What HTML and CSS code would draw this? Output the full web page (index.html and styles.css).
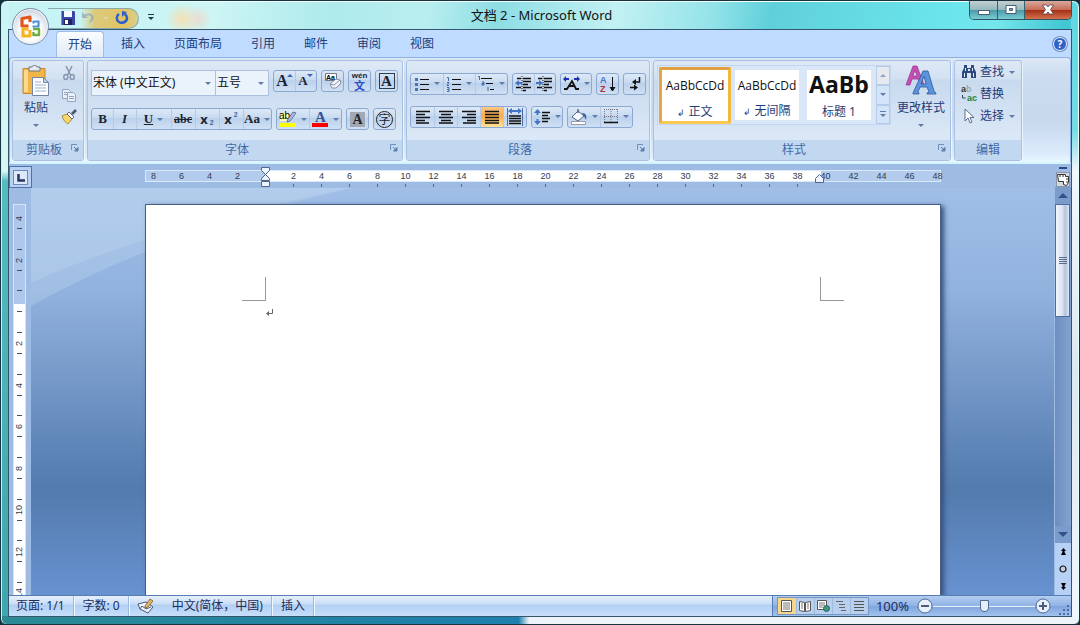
FILE: index.html
```html
<!DOCTYPE html>
<html lang="zh-CN">
<head>
<meta charset="utf-8">
<title>文档 2 - Microsoft Word</title>
<link rel="stylesheet" href="styles.css">
</head>
<body>
<div class="window">
  <header class="titlebar">
    <div class="quick">
      <button class="qbtn" aria-label="保存"><svg width="14" height="14" viewBox="0 0 14 14"><path d="M0 0h13l1 1v13H0z" fill="#3c46a6"/><path d="M3 0h8v6H3z" fill="#f4f8ff"/><path d="M3 8h8v6H3z" fill="#23235e"/><path d="M4 9h3v4H4z" fill="#fff"/><path d="M0 0h1v14H0z" fill="#7f8be0"/></svg></button>
      <button class="qbtn faded" aria-label="撤消"><svg width="16" height="14" viewBox="0 0 16 14"><path d="M1 1v6h6L5 5c3-2 6 0 5 3l-2 4c5-2 6-6 3-8.500C9 2 6 2 3.500 3.500z" fill="#8fa3b8"/></svg><i class="arrow pale"></i></button>
      <button class="qbtn" aria-label="重复"><svg width="14" height="14" viewBox="0 0 14 14"><path d="M4 3C1 5 1 9 4 11s8 0 8-4c0-2-1-3-2-4" fill="none" stroke="#2b5fd0" stroke-width="2.500"/><path d="M7 0v6L12 1z" fill="#2b5fd0"/></svg></button>
    </div>
    <button class="qmore" aria-label="自定义快速访问工具栏"><i class="bar"></i><i class="arrow dark"></i></button>
    <h1 class="caption">文档 2 - Microsoft Word</h1>
    <div class="controls">
      <button class="ctl min" aria-label="最小化"><svg width="14" height="12" viewBox="0 0 14 12"><path d="M1.500 6.500h11v4h-11z" fill="#fff" stroke="#4a5d70"/></svg></button>
      <button class="ctl max" aria-label="最大化"><svg width="14" height="12" viewBox="0 0 14 12"><path d="M2 1.500h10v8H2z" fill="#fff" stroke="#4a5d70"/><path d="M5.500 4.500h3v2h-3z" fill="#70b8c4" stroke="#4a5d70"/></svg></button>
      <button class="ctl close" aria-label="关闭"><svg width="14" height="12" viewBox="0 0 14 12"><path d="M1.500 1h4L7 3l1.500-2h4L9.500 5.500l3 4.500h-4L7 8l-1.500 2h-4l3-4.500z" fill="#fff" stroke="#5a4850" stroke-width=".8"/></svg></button>
    </div>
    <button class="orb" aria-label="Office 按钮"><svg width="24" height="24" viewBox="0 0 24 24" fill="none"><path d="M9.500 11H3V3.500L11 2V7" stroke="#e0561c" stroke-width="3.200" stroke-linejoin="round"/><path d="M13.500 11.500h6v-5h-5v2" stroke="#4a93dc" stroke-width="2.200" stroke-linejoin="round"/><path d="M9.500 14H4v7h7v-6" stroke="#f5b420" stroke-width="3.200" stroke-linejoin="round"/><path d="M14 14h6v6h-5.500v-3" stroke="#6fae3c" stroke-width="2.400" stroke-linejoin="round"/></svg></button>
  </header>

  <div class="client">
    <nav class="tabs">
      <button class="tab active">开始</button>
      <button class="tab">插入</button>
      <button class="tab">页面布局</button>
      <button class="tab">引用</button>
      <button class="tab">邮件</button>
      <button class="tab">审阅</button>
      <button class="tab">视图</button>
      <button class="help" aria-label="帮助">?</button>
    </nav>

    <div class="ribbon">
      <section class="group clip">
        <div class="body cliprow">
          <button class="big"><svg width="28" height="32" viewBox="0 0 28 32"><path d="M1 3.500h22v25H1z" fill="#f2b548" stroke="#c98a2a"/><path d="M2 5h4v22H2z" fill="#ffd98a"/><path d="M7 2h3c0-2 5-2 5 0h3v4H7z" fill="#e6ebf2" stroke="#6b7482"/><path d="M10.500 12.500h11l5 5v13h-16z" fill="#fdfeff" stroke="#7486a5"/><path d="M21.500 12.500v5h5z" fill="#c8d6ea" stroke="#7486a5"/><path d="M13 17h6M13 20h11M13 23h11M13 26h11" stroke="#9fb0cc"/></svg><span>粘贴</span><i class="arrow"></i></button>
          <div class="stack">
            <button class="mini" aria-label="剪切"><svg width="16" height="16" viewBox="0 0 16 16" fill="none" stroke="#8798b3"><path d="M5 1l4.500 9M11 1L6.500 10" stroke-width="1.600"/><ellipse cx="4.800" cy="12" rx="2" ry="2.500" stroke-width="1.500"/><ellipse cx="11.200" cy="12" rx="2" ry="2.500" stroke-width="1.500"/></svg></button>
            <button class="mini" aria-label="复制"><svg width="16" height="16" viewBox="0 0 16 16" fill="#e9f0fa" stroke="#90a4c4"><path d="M1.500 2.500h6l2 2v7h-8z"/><path d="M6.500 5.500h6l2 2v7h-8z"/><path d="M3 5.500h3M3 7.500h3M8 9.500h5M8 11.500h5"/></svg></button>
            <button class="mini" aria-label="格式刷"><svg width="16" height="16" viewBox="0 0 16 16"><path d="M1 7l5-2 5 5-4 5c-2-1-5-4-6-8z" fill="#f6d66c" stroke="#9b7b27" stroke-width=".8"/><path d="M6 5l2-2 5 5-2 2z" fill="#fff" stroke="#667"/><path d="M10 4l4-4 2 2-4 4z" fill="#4a5878"/></svg></button>
          </div>
        </div>
        <footer class="label"><span>剪贴板</span><button class="launch" aria-label="剪贴板选项"><svg width="8" height="8" viewBox="0 0 8 8"><path d="M.5 6V.5H6" fill="none" stroke="#6f8fbd"/><path d="M3 3l3 3M7 3.500V7H3.500z" stroke="#5c7cab" fill="#5c7cab"/></svg></button></footer>
      </section>

      <section class="group font">
        <div class="body rows">
          <div class="row top">
            <label class="combo wide"><select aria-label="字体"><option>宋体 (中文正文)</option></select></label>
            <label class="combo narrow"><select aria-label="字号"><option>五号</option></select></label>
            <div class="set"><button class="tb w22 serif" aria-label="增大字体"><b class="f16">A</b><i class="up blue"></i></button><button class="tb w22 serif" aria-label="缩小字体"><b class="f13">A</b><i class="down blue"></i></button></div>
            <div class="set"><button class="tb w22" aria-label="清除格式"><svg width="18" height="18" viewBox="0 0 18 18"><path d="M1.500 1.500h11v7h-11z" fill="#fff" stroke="#778"/><text x="2" y="8" font-size="7" font-weight="bold" font-family="Liberation Sans">Aa</text><path d="M6 12l6-5 4 1 1 3-5 5H8z" fill="#f3f5fa" stroke="#8490a8"/><path d="M6 12l4 1 6-5" fill="none" stroke="#8490a8"/></svg></button></div>
            <div class="set"><button class="tb w22 pinyin" aria-label="拼音指南"><small>wén</small><span>文</span></button></div>
            <div class="set"><button class="tb w22 serif" aria-label="字符边框"><b class="boxed">A</b></button></div>
          </div>
          <div class="row">
            <div class="set"><button class="tb w22 serif f13"><b>B</b></button><button class="tb w23 serif f13"><b><em>I</em></b></button><button class="tb w35 serif f13"><b><u>U</u></b><i class="arrow"></i></button><button class="tb w24 serif f12"><b><s>abc</s></b></button><button class="tb w24 f13"><b>x</b><sub>2</sub></button><button class="tb w24 f13"><b>x</b><sup>2</sup></button><button class="tb w28 serif f13"><b>Aa</b><i class="arrow"></i></button></div>
            <div class="set"><button class="tb w32" aria-label="突出显示"><svg width="18" height="18" viewBox="0 0 18 18"><path d="M1 13h16v4H1z" fill="#ff0"/><path d="M1 3h9v8H1z" fill="#ffffb0"/><text x="0" y="9" font-size="10" font-family="Liberation Sans">ab</text><path d="M9 9l5-7 3 1-6 8-3 1z" fill="#a9bedf" stroke="#4a5f85" stroke-width=".8"/></svg><i class="arrow"></i></button><button class="tb w32" aria-label="字体颜色"><svg width="18" height="18" viewBox="0 0 18 18"><path d="M1 13h16v4H1z" fill="#f00"/><text x="4" y="12" font-size="15" font-weight="bold" fill="#2f5597" font-family="Liberation Serif">A</text></svg><i class="arrow"></i></button></div>
            <div class="set"><button class="tb w22 serif" aria-label="字符底纹"><b class="shaded">A</b></button></div>
            <div class="set"><button class="tb w22" aria-label="带圈字符"><span class="circled">字</span></button></div>
          </div>
        </div>
        <footer class="label"><span>字体</span><button class="launch" aria-label="字体选项"><svg width="8" height="8" viewBox="0 0 8 8"><path d="M.5 6V.5H6" fill="none" stroke="#6f8fbd"/><path d="M3 3l3 3M7 3.500V7H3.500z" stroke="#5c7cab" fill="#5c7cab"/></svg></button></footer>
      </section>

      <section class="group para">
        <div class="body rows">
          <div class="row">
            <div class="set">
              <button class="tb w32" aria-label="项目符号"><svg width="16" height="16" viewBox="0 0 16 16"><path d="M6 3.500h9M6 8.500h9M6 13.500h9" stroke="#111"/><path d="M1 2h3v3H1zM1 7h3v3H1zM1 12h3v3H1z" fill="#4a72b5"/></svg><i class="arrow"></i></button>
              <button class="tb w32" aria-label="编号"><svg width="16" height="16" viewBox="0 0 16 16"><path d="M6 3.500h9M6 8.500h9M6 13.500h9" stroke="#111"/><path d="M1 1.500h1.500V5M1 6.500h2L1 9.500h2M1 11.500h2v4H1M1 13.500h2" fill="none" stroke="#3f68ad"/></svg><i class="arrow"></i></button>
              <button class="tb w32" aria-label="多级列表"><svg width="18" height="16" viewBox="0 0 18 16"><path d="M4 2.500h11M9 7.500h7M13 13.500h4" stroke="#111"/><path d="M1 .5h1.500V4M5 6h2v3H5V7.500h2M11 11v4" fill="none" stroke="#3f68ad"/></svg><i class="arrow"></i></button>
            </div>
            <div class="set">
              <button class="tb w22" aria-label="减少缩进"><svg width="18" height="16" viewBox="0 0 18 16"><path d="M2 2.500h4M8 2.500h8M8 5.500h8M8 8.500h5M1 11.500h5M8 11.500h8M8 14.500h3" stroke="#111" stroke-width="1.500"/><path d="M7 0v16" stroke="#111" stroke-dasharray="1 1"/><path d="M0 7l4-3v2h3v2H4v2z" fill="#4472c4"/></svg></button>
              <button class="tb w22" aria-label="增加缩进"><svg width="18" height="16" viewBox="0 0 18 16"><path d="M2 2.500h4M8 2.500h8M8 5.500h8M8 8.500h5M1 11.500h5M8 11.500h8M8 14.500h3" stroke="#111" stroke-width="1.500"/><path d="M7 0v16" stroke="#111" stroke-dasharray="1 1"/><path d="M7 7L3 4v2H0v2h3v2z" fill="#4472c4"/></svg></button>
            </div>
            <div class="set"><button class="tb w30" aria-label="中文版式"><svg width="17" height="16" viewBox="0 0 17 16"><path d="M1 13h3l5-8 4 8h3M5.500 10h6" fill="none" stroke="#111" stroke-width="1.800"/><path d="M0 3l3-3v2h3v2H3v2zM17 3l-3-3v2h-3v2h3v2z" fill="#1c2fae"/></svg><i class="arrow"></i></button></div>
            <div class="set"><button class="tb w22" aria-label="排序"><svg width="16" height="18" viewBox="0 0 16 18"><text x="0" y="8" font-size="9" font-weight="bold" fill="#4472c4" font-family="Liberation Sans">A</text><text x="0" y="17" font-size="9" font-weight="bold" fill="#b52d46" font-family="Liberation Sans">Z</text><path d="M12.500 2v13M10 12l2.500 4 2.500-4" stroke="#111" fill="#111"/></svg></button></div>
            <div class="set"><button class="tb w22" aria-label="显示编辑标记"><svg width="14" height="16" viewBox="0 0 14 16"><path d="M11.500 1v5H7M2 11.500h5" stroke="#111" stroke-width="1.500" fill="none"/><path d="M4 6l4-3v6zM10 11.500l-4-3v6z" fill="#111"/></svg></button></div>
          </div>
          <div class="row">
            <div class="set">
              <button class="tb w23" aria-label="左对齐"><svg width="16" height="14" viewBox="0 0 16 14"><path d="M1 1.500h14M1 4.500h9M1 7.500h14M1 10.500h9M1 13h13" stroke="#111" stroke-width="1.400"/></svg></button>
              <button class="tb w23" aria-label="居中"><svg width="16" height="14" viewBox="0 0 16 14"><path d="M1 1.500h14M3 4.500h10M1 7.500h14M3 10.500h10M1 13h14" stroke="#111" stroke-width="1.400"/></svg></button>
              <button class="tb w23" aria-label="右对齐"><svg width="16" height="14" viewBox="0 0 16 14"><path d="M1 1.500h14M6 4.500h9M1 7.500h14M6 10.500h9M2 13h13" stroke="#111" stroke-width="1.400"/></svg></button>
              <button class="tb w23 on" aria-label="两端对齐"><svg width="16" height="14" viewBox="0 0 16 14"><path d="M1 1.500h14M1 4.500h14M1 7.500h14M1 10.500h14M1 13h14" stroke="#111" stroke-width="1.400"/></svg></button>
              <button class="tb w23" aria-label="分散对齐"><svg width="16" height="18" viewBox="0 0 16 18"><path d="M.5 0v18M15.500 0v18" stroke="#4a6ca5"/><path d="M1 3l4-3v2h6V0l4 3-4 3V4H5v2z" fill="#4472c4"/><path d="M2 8h12M2 10.500h12M2 13h12M2 15.500h12" stroke="#111" stroke-width="1.400"/></svg></button>
            </div>
            <div class="set"><button class="tb w30" aria-label="行距"><svg width="17" height="16" viewBox="0 0 17 16"><path d="M3.500 0L7 4H4.500v2h-2V4H0zM3.500 16L7 12H4.500v-2h-2v2H0z" fill="#4472c4"/><path d="M8 3.500h8M8 6.500h6M8 9.500h8M8 12.500h6" stroke="#111" stroke-width="1.400"/></svg><i class="arrow"></i></button></div>
            <div class="set">
              <button class="tb w32" aria-label="底纹"><svg width="18" height="17" viewBox="0 0 18 17"><path d="M2 9l6-6 6 5-6 5z" fill="#f5f8fd" stroke="#55647f"/><path d="M8 5V1" stroke="#55647f" stroke-width="1.400"/><path d="M12 5c4 0 5 3 4 7l-2-4z" fill="#345ca3"/><path d="M1.500 13.500h14v3h-14z" fill="#fff" stroke="#99a"/></svg><i class="arrow"></i></button>
              <button class="tb w32" aria-label="边框"><svg width="15" height="15" viewBox="0 0 15 15"><path d="M.5 0v14M7 0v14M13.500 0v14M0 .5h14M0 7.500h14" stroke="#778" stroke-dasharray="1 1"/><path d="M0 13.500h14" stroke="#111" stroke-width="1.500"/></svg><i class="arrow"></i></button>
            </div>
          </div>
        </div>
        <footer class="label"><span>段落</span><button class="launch" aria-label="段落选项"><svg width="8" height="8" viewBox="0 0 8 8"><path d="M.5 6V.5H6" fill="none" stroke="#6f8fbd"/><path d="M3 3l3 3M7 3.500V7H3.500z" stroke="#5c7cab" fill="#5c7cab"/></svg></button></footer>
      </section>

      <section class="group styles">
        <div class="body stylerow">
          <div class="gallery">
            <button class="style chosen"><span class="sample">AaBbCcDd</span><span class="name"><small>↲</small> 正文</span></button>
            <button class="style"><span class="sample">AaBbCcDd</span><span class="name"><small>↲</small> 无间隔</span></button>
            <button class="style"><span class="sample head">AaBb</span><span class="name">标题 1</span></button>
            <div class="gscroll"><button class="dim" aria-label="上一行"><i class="up"></i></button><button aria-label="下一行"><i class="arrow"></i></button><button aria-label="其他"><i class="bar"></i><i class="arrow"></i></button></div>
          </div>
          <button class="big"><svg width="32" height="32" viewBox="0 0 32 32"><path d="M1 20L8 1h4l7 19h-4l-2-6H7l-2 6zM8 11h4l-2-6z" fill="#c74fb4" stroke="#93308a" stroke-width=".7"/><path d="M8 28L18 6h5l6 20 2 2v1h-9v-1l2-1-2-5h-7l-2 5 1 1v1H8zM16 19h5l-2-8z" fill="#5b93dc" stroke="#2c5a9e" stroke-width=".8"/></svg><span>更改样式</span><i class="arrow"></i></button>
        </div>
        <footer class="label"><span>样式</span><button class="launch" aria-label="样式选项"><svg width="8" height="8" viewBox="0 0 8 8"><path d="M.5 6V.5H6" fill="none" stroke="#6f8fbd"/><path d="M3 3l3 3M7 3.500V7H3.500z" stroke="#5c7cab" fill="#5c7cab"/></svg></button></footer>
      </section>

      <section class="group edit">
        <div class="body editcol">
          <button class="cmd"><svg width="16" height="16" viewBox="0 0 16 16"><path d="M3 1h3v3h4V1h3v3l2 4v6h-5V9H6v5H1V8l2-4z" fill="#2c4a7c"/><path d="M3 9h1v4H3zM12 9h1v4h-1zM4 4h1v3H4zM11 4h1v3h-1zM7 5h2v2H7z" fill="#dfe9f8"/></svg>查找<i class="arrow"></i></button>
          <button class="cmd"><svg width="16" height="16" viewBox="0 0 16 16" font-family="Liberation Sans" font-size="9" font-weight="bold"><text x="0" y="6" fill="#333">a<tspan fill="#9aa">b</tspan></text><text x="6" y="15" fill="#19843a">ac</text><path d="M1.500 9v3h3" fill="none" stroke="#345"/></svg>替换</button>
          <button class="cmd"><svg width="16" height="16" viewBox="0 0 16 16"><path d="M4 1v12l3-3 2 5 2-1-2-4.500h4z" fill="#fff" stroke="#5d6f8e"/></svg>选择<i class="arrow"></i></button>
        </div>
        <footer class="label"><span>编辑</span></footer>
      </section>
    </div>

    <div class="workspace">
      <div class="corner"><button class="tabstop" aria-label="制表符"><svg width="8" height="8" viewBox="0 0 8 8"><path d="M1.500 0v6.500H8" fill="none" stroke="#26365e" stroke-width="2.500"/></svg></button></div>
      <div class="hruler">
        <div class="htrack">
          <div class="hcells"><span>8</span><span>6</span><span>4</span><span>2</span><span></span><span class="t">2</span><span class="t">4</span><span class="t">6</span><span class="t">8</span><span class="t">10</span><span class="t">12</span><span class="t">14</span><span class="t">16</span><span class="t">18</span><span class="t">20</span><span class="t">22</span><span class="t">24</span><span class="t">26</span><span class="t">28</span><span class="t">30</span><span class="t">32</span><span class="t">34</span><span class="t">36</span><span class="t">38</span><span>40</span><span>42</span><span>44</span><span>46</span><span>48</span></div>
          <svg class="indent-left" width="10" height="21" viewBox="0 0 10 21" fill="#eef4fd" stroke="#50658f"><path d="M.5.5h8v3l-4 4-4-4zM.5 13.500v-2l4-4 4 4v2zM.5 14.500h8v5h-8z"/></svg>
          <svg class="indent-right" width="10" height="9" viewBox="0 0 10 9" fill="#eef4fd" stroke="#50658f"><path d="M.5 8.500v-4l4-4 4 4v4z"/></svg>
        </div>
      </div>
      <div class="vruler"><div class="vtrack"><div class="vcells"><span class="first">4</span><span>2</span><span></span><span>2</span><span>4</span><span>6</span><span>8</span><span>10</span><span>12</span><span>14</span></div></div></div>
      <main class="canvas">
        <svg class="swoosh" width="340" height="140" viewBox="0 0 340 140"><path d="M0 0h320Q130 45 0 118z" fill="#c4dbf3" opacity=".3"/><path d="M0 0h320Q120 40 0 95z" fill="#c9def4" opacity=".25"/></svg>
        <article class="page">
          <div class="marks"><i class="mark at-left"></i><i class="mark at-right"></i></div>
          <p class="para-mark"><svg width="8" height="8" viewBox="0 0 8 8"><path d="M6.500 0v4.500H2" fill="none" stroke="#666"/><path d="M0 4.500L3 2v5z" fill="#666"/></svg></p>
        </article>
      </main>
      <aside class="scroll">
        <i class="split"></i>
        <button class="toggle" aria-label="标尺"><svg width="12" height="12" viewBox="0 0 12 12"><path d="M.5.5h8v2h3v6l-2 3-3-1v-3h-5z" fill="#fff" stroke="#333"/><path d="M3 1v2M6 1v2M9 5h2M9 8h2" stroke="#333"/></svg></button>
        <button class="sarrow" aria-label="向上滚动"><i class="up"></i></button>
        <div class="track"><div class="thumb"><i></i><i></i><i></i><i></i></div></div>
        <button class="sarrow" aria-label="向下滚动"><i class="arrow"></i></button>
        <div class="browse">
          <button aria-label="前一页"><svg width="7" height="8" viewBox="0 0 7 8"><path d="M3.500 0L6 3H4.500v1L6 7H1l1.500-3V3H1z"/></svg></button>
          <button aria-label="选择浏览对象"><svg width="8" height="8" viewBox="0 0 8 8"><circle cx="4" cy="4" r="3" fill="#c5cedd" stroke="#111" stroke-width="1.200"/></svg></button>
          <button aria-label="下一页"><svg width="7" height="8" viewBox="0 0 7 8"><path d="M3.500 8L6 5H4.500V4L6 1H1l1.500 3v1H1z"/></svg></button>
        </div>
      </aside>
    </div>

    <footer class="status">
      <button class="stat">页面: 1/1</button>
      <button class="stat">字数: 0</button>
      <button class="stat plain" aria-label="校对"><svg width="18" height="16" viewBox="0 0 18 16"><path d="M1 6l8-2 7 5-5 6-8-4z" fill="#f3f6fc" stroke="#47577a"/><path d="M3 11l2-3 4 3 5-2" fill="none" stroke="#47577a"/><path d="M8 8l5-7 3 2-5 6-3 1z" fill="#e0b56c" stroke="#7a5a24" stroke-width=".8"/></svg></button>
      <button class="stat">中文(简体，中国)</button>
      <button class="stat">插入</button>
      <div class="right">
        <div class="views">
          <button class="vw sel" aria-label="页面视图"><svg width="12" height="12" viewBox="0 0 12 12"><path d="M.5.5h10v11H.5z" fill="#fff" stroke="#555"/><path d="M2 3h7M2 5h7M2 7h7M2 9h7" stroke="#777"/></svg></button>
          <button class="vw" aria-label="阅读版式"><svg width="12" height="12" viewBox="0 0 12 12"><path d="M.5 1.500l5 1v9l-5-1zM11.500 1.500l-5 1v9l5-1z" fill="#fff" stroke="#555"/><path d="M2 4h2M2 6h2M2 8h2M8 4h2M8 6h2M8 8h2" stroke="#777"/></svg></button>
          <button class="vw" aria-label="Web 版式"><svg width="13" height="12" viewBox="0 0 13 12"><path d="M.5.5h9v9h-9z" fill="#fff" stroke="#555"/><path d="M2 3h6M2 5h6M2 7h4" stroke="#777"/><circle cx="9.500" cy="8.500" r="3" fill="#3f9a78" stroke="#2a5f80"/></svg></button>
          <button class="vw" aria-label="大纲视图"><svg width="12" height="12" viewBox="0 0 12 12"><path d="M1 1.500h7M4 4.500h6M4 7.500h6M6 10.500h5" stroke="#666"/></svg></button>
          <button class="vw" aria-label="普通视图"><svg width="12" height="12" viewBox="0 0 12 12"><path d="M1 1.500h10M1 4.500h10M1 7.500h10M1 10.500h10" stroke="#555"/></svg></button>
        </div>
        <button class="pct">100%</button>
        <button class="zoom" aria-label="缩小"><svg width="16" height="16" viewBox="0 0 16 16"><circle cx="8" cy="8" r="7" fill="#e8f0fb" stroke="#506a95"/><path d="M4 8h8" stroke="#4a5b7c" stroke-width="2"/></svg></button>
        <input class="slider" type="range" min="10" max="190" value="100" aria-label="显示比例">
        <button class="zoom" aria-label="放大"><svg width="16" height="16" viewBox="0 0 16 16"><circle cx="8" cy="8" r="7" fill="#e8f0fb" stroke="#506a95"/><path d="M4 8h8M8 4v8" stroke="#4a5b7c" stroke-width="2"/></svg></button>
        <svg class="grip" width="12" height="12" viewBox="0 0 12 12"><path d="M9 1h2v2H9zM5 5h2v2H5zM9 5h2v2H9zM1 9h2v2H1zM5 9h2v2H5zM9 9h2v2H9z" fill="#4a6ea9"/></svg>
      </div>
    </footer>
  </div>
</div>
</body>
</html>
```

FILE: styles.css
```css
* { box-sizing: border-box; }
html, body { height: 100%; margin: 0; }
body {
  background: #14303c;
  color: #1e3c78;
  font: 12px/16px "Noto Sans", "Noto Sans CJK SC", sans-serif;
  overflow: hidden;
}
button, select { font: inherit; color: inherit; border: 0; margin: 0; padding: 0; background: none; }
button { display: flex; align-items: center; justify-content: center; white-space: nowrap; }
svg { display: block; flex: none; overflow: visible; }
i { display: block; flex: none; }
.serif { font-family: "Liberation Serif", serif; }
.f12 { font-size: 12px; }
.f13 { font-size: 13px; }
.f16 { font-size: 16px; }

.arrow { width: 0; height: 0; border: 3px solid transparent; border-top-color: #5f7da8; border-bottom: 0; }
.up { width: 0; height: 0; border: 3px solid transparent; border-bottom-color: #8fa3c0; border-top: 0; }
.arrow.dark { border-top-color: #1c3a4a; }
.arrow.pale { border-top-color: #d8e0c8; }
.bar { width: 6px; height: 1px; background: #5f7da8; }

/* Window frame */
.window {
  position: relative;
  height: 100vh;
  display: flex;
  flex-direction: column;
  padding: 0 7px 7px;
  border: 1px solid #173340;
  border-radius: 7px 7px 6px 6px;
  box-shadow: inset 0 1px #f2ffff, inset 1px 0 #c9f2f2, inset -1px 0 #e8ffff;
  background:
    linear-gradient(90deg, #2c8a94, #1c7fae 48%, #eef3f9 49%) bottom / 100% 8px no-repeat,
    linear-gradient(#c9f5f5 0, #d8f6f4 170px, #54bcc0 180px, #3fa6ae 100%) left / 8px 100% no-repeat,
    linear-gradient(#5fd6e2 0, #78dce6 130px, #f0f8fc 170px, #dce8f0 60%, #f2f6fc 100%) right / 8px 100% no-repeat,
    linear-gradient(100deg, #c4f3f4 0, #cdf5f4 18%, #aeeaec 28%, #b9eef0 36%, #8ddde4 42%, #c2f1f3 52%, #94e3e9 60%, #5fd0da 65%, #6be5ec 80%, #76e6ec 84%, #41c6d4 90%, #55dae4 94%, #60d0dc 100%);
}

.titlebar { flex: none; height: 28px; display: flex; align-items: center; justify-content: space-between; position: relative; }
.quick {
  display: flex; align-items: center; gap: 6px; height: 21px;
  margin: 6px 0 0 40px; padding: 0 9px 0 13px;
  border: 1px solid #8aa9ae; border-left: 0; border-radius: 0 11px 11px 0;
  background: linear-gradient(90deg, transparent 36%, #dcca7c 52%, #e2c460 85%, #d8d090);
}
.qbtn { gap: 6px; }
.faded { opacity: .7; }
.qmore { flex-direction: column; gap: 2px; margin: 4px 0 0 9px; }
.qmore .bar { background: #1c3a4a; }
.caption {
  flex: 1; margin: 0 0 0 14px; padding-right: 54px; align-self: stretch; color: #111;
  font-size: 13px; font-weight: 400; line-height: 29px; text-align: center;
  background: radial-gradient(circle at 14px 18px, #f0e2ba 2px, transparent 16px), radial-gradient(circle at 30px 18px, #e6e0d8 2px, transparent 14px);
}
.controls {
  display: flex; align-self: flex-start; height: 19px; overflow: hidden;
  border: 1px solid #2c5662; border-top: 0; border-radius: 0 0 5px 5px;
}
.ctl { width: 28px; height: 100%; border-right: 1px solid #2f6470; background: linear-gradient(#c5ced0, #92b9be 50%, #4b9aa6 51%, #79ccd4); }
.ctl.max { width: 27px; }
.ctl.close { width: 46px; border-right: 0; background: linear-gradient(#d9a99c, #c66a55 50%, #a42f16 51%, #d4714e); }
.orb {
  position: absolute; left: 4px; top: 7px; z-index: 2; width: 37px; height: 37px;
  border: 1px solid #7c8fa6; border-radius: 50%;
  background: radial-gradient(circle at 50% 60%, #fff 35%, #d9dfe9 65%, #a6b2c4 100%);
  box-shadow: inset 0 0 0 1px #f4f7fb;
}

.client { flex: 1; min-height: 0; display: flex; flex-direction: column; border: 1px solid #33566b; background: #bfdbff; }

/* Tabs */
.tabs { display: flex; align-items: flex-end; height: 27px; padding: 0 2px 0 47px; flex: none; }
.tab { height: 26px; padding: 0 15px; margin-right: -1px; }
.tab.active {
  padding: 0 11px; margin: 0 2px 0 0; border: 1px solid #9dbce6; border-bottom: 0; border-radius: 4px 4px 0 0;
  background: linear-gradient(#fafdff, #e0eaf7);
}
.help {
  width: 14px; height: 14px; margin: 0 2px 6px auto; border-radius: 50%; border: 1px solid #e8f2ff;
  background: #2f62c8; color: #fff; font-weight: 700; font-size: 10px; box-shadow: 0 0 0 1px #6f8fc8;
}

/* Ribbon */
.ribbon {
  flex: none; display: flex; gap: 3px; height: 107px; padding: 2px;
  border: 1px solid #8db2e3; border-bottom: 2px solid #d4f4ff; border-radius: 4px;
  background: linear-gradient(#dde8f6 0, #cddcf0 16%, #c7d8ed 60%, #dcebfb 92%, #e8f8ff 100%);
}
.group {
  display: flex; flex-direction: column; height: 101px; overflow: hidden;
  border: 1px solid #a6c1e2; border-radius: 3px; box-shadow: 1px 1px #eaf4ff;
  background: linear-gradient(#dfe9f6 0, #d2e0f1 18%, #c9daee 19%, #dbe8f7 80%);
}
.body { flex: 1; min-height: 0; }
.label { flex: none; display: flex; align-items: center; height: 20px; padding: 0 4px; color: #4468a6; background: #c1d8f0; }
.label span { flex: 1; text-align: center; }
.font .label span, .para .label span, .styles .label span { padding-right: 8px; }
.launch { align-self: flex-start; padding-top: 4px; }
.clip { width: 72px; }
.font { width: 316px; }
.para { width: 244px; }
.styles { width: 298px; }
.edit { width: 68px; }

.cliprow { display: flex; padding: 4px 6px 0 7px; gap: 9px; }
.cliprow .big { width: 32px; }
.cliprow .big svg { margin-bottom: 3px; }
.big { flex-direction: column; justify-content: flex-start; }
.big .arrow { margin-top: 8px; }
.stack { display: flex; flex-direction: column; gap: 6px; }

.rows { display: flex; flex-direction: column; padding: 9px 3px 0; gap: 10px; }
.para .rows { padding-top: 12px; gap: 12px; }
.row { display: flex; align-items: center; gap: 4px; height: 26px; }
.row.top { align-items: flex-start; }
.para .row { height: 21px; }
.combo { position: relative; display: block; height: 26px; border: 1px solid #abc1de; background: #eaf2fb; }
.combo.wide { width: 125px; margin-right: -5px; }
.combo.narrow { width: 54px; }
.combo::after { content: ""; position: absolute; right: 4px; top: 11px; border: 3px solid transparent; border-top-color: #5f7da8; border-bottom: 0; }
.combo select { appearance: none; width: 100%; height: 100%; padding: 0 12px 0 1px; color: #111; outline: 0; }
.set { display: flex; height: 22px; border: 1px solid #8ba9d2; border-radius: 3px; overflow: hidden; background: linear-gradient(#dce8f7, #c8daf0 45%, #bad0eb 46%, #cfe0f4); }
.tb { height: 20px; color: #1c2430; gap: 2px; }
.tb + .tb { box-shadow: inset 1px 0 #b3c9e6; }
.tb .arrow { margin-left: 2px; }
.tb sub, .tb sup { font: bold 7px/8px "Liberation Sans", sans-serif; color: #3d64aa; }
.tb sub { align-self: flex-end; margin-bottom: 2px; }
.tb sup { align-self: flex-start; margin-top: 2px; }
.w22 { width: 21px; }
.w23 { width: 23px; }
.w24 { width: 24px; }
.w28 { width: 28px; }
.w30 { width: 30px; }
.w32 { width: 32px; }
.w35 { width: 35px; }
.tb .blue { align-self: flex-start; margin: 3px 0 0 -3px; }
.up.blue { border-bottom-color: #3b64b0; }
.down { border: 3px solid transparent; border-top-color: #3b64b0; border-bottom: 0; }
.pinyin { flex-direction: column; gap: 0; }
.pinyin small { font: bold 8px/8px "Liberation Sans", sans-serif; }
.pinyin span { color: #2f4fc8; font-size: 11px; line-height: 11px; font-weight: 700; }
.boxed { width: 16px; border: 1px solid #2b3c55; font-size: 15px; line-height: 14px; }
.shaded { width: 15px; background: #a3a9b2; font-size: 14px; line-height: 15px; }
.circled { width: 17px; height: 17px; border: 1px solid #222; border-radius: 50%; line-height: 15px; }
.on { background: linear-gradient(#f9c98a, #fba94c 45%, #fdb95a 60%, #ffe39a); }

.stylerow { display: flex; padding: 4px 4px 0 3px; gap: 5px; }
.gallery { display: flex; align-items: center; gap: 4px; flex: 1; height: 60px; padding-left: 1px; border: 1px solid #c3d6ef; background: #d9e7f8; }
.style { flex-direction: column; justify-content: space-between; width: 64px; height: 50px; padding: 7px 0 0; overflow: hidden; background: #fff; }
.style.chosen { width: 72px; height: 57px; border: 3px solid; border-color: #e0a040 #f2b840 #f8c850 #e8a440; border-radius: 2px; }
.sample { color: #111; font: 12px/18px "Open Sans", sans-serif; }
.sample.head { font-size: 23px; line-height: 24px; font-weight: 700; }
.style:nth-child(3) { margin-left: 4px; padding-top: 2px; }
.name small { font-size: 9px; }
.gscroll { display: flex; flex-direction: column; align-self: stretch; margin-left: auto; width: 14px; }
.gscroll button { flex: 1; flex-direction: column; gap: 2px; border: 1px solid #b5cbe8; background: #d4e4f8; }
.gscroll .dim { background: #e6e9ee; }
.stylerow .big { width: 50px; }
.stylerow .big svg { margin-bottom: 3px; }

.editcol { display: flex; flex-direction: column; gap: 6px; padding: 3px 0 0 6px; align-items: flex-start; }
.cmd { gap: 3px; height: 16px; }
.cmd .arrow { margin-left: 2px; }

/* Rulers and page */
.workspace { flex: 1; min-height: 0; display: grid; grid-template: 24px minmax(0, 1fr) / 22px minmax(0, 1fr) 17px; background: #9dbbe3; }
.corner { padding: 2px 0 0; }
.tabstop { width: 23px; height: 22px; border: 1px solid #4f72ae; background: #b9d0f0; }
.tabstop svg { box-sizing: content-box; padding: 3px 2px 2px 3px; border: 1px solid #6d8bbb; background: #dce9fa; }
.hruler { display: flex; justify-content: center; }
.htrack { position: relative; flex: none; width: 796px; height: 12px; margin-top: 6px; border: 1px solid #d9e8fa; background: linear-gradient(90deg, #b3cbed 120px, #fff 120px, #fff 675px, #b3cbed 675px); }
.hcells { display: flex; margin-left: -6px; width: 812px; font: 9px/11px "Liberation Sans", sans-serif; color: #333c50; }
.hcells span { width: 28px; text-align: center; }
.hcells .t::after { content: ""; display: block; width: 1px; height: 3px; margin: 2px auto 0; background: #53678c; }
.indent-left { position: absolute; left: 115px; top: -4px; }
.indent-right { position: absolute; left: 669px; top: 3px; }
.vruler { padding: 16px 0 0 4px; overflow: hidden; }
.vtrack { width: 13px; height: 100%; border: solid #d5e4f8; border-width: 1px 1px 0; overflow: hidden; background: linear-gradient(#aec8ec 99px, #fff 99px); }
.vcells { display: grid; grid-auto-rows: 42px 42px 41px; margin-top: -8px; font: 9px/11px "Liberation Sans", sans-serif; color: #333c50; }
.vcells span {
  writing-mode: vertical-rl; transform: rotate(180deg); text-align: center;
  background: linear-gradient(#444f66, #444f66) 3px 10px / 5px 1px no-repeat, linear-gradient(#444f66, #444f66) 3px 31px / 5px 1px no-repeat;
}
.vcells .first { background: linear-gradient(#444f66, #444f66) 3px 10px / 5px 1px no-repeat; }
.canvas { position: relative; display: flex; justify-content: center; overflow: hidden; padding-top: 16px; background: linear-gradient(#a0bee7 0, #92b2de 25%, #5c83b6 66%, #547bad 74%, #6792d0 100%); }
.swoosh { position: absolute; left: 0; top: 0; }
.page { position: relative; flex: none; width: 796px; padding: 72px 96px 0; background: #fff; border: 1px solid #465f82; border-bottom: 0; box-shadow: 3px 2px 5px #35507c; }
.marks { display: flex; justify-content: space-between; }
.mark { width: 24px; height: 24px; border-bottom: 1px solid #999; }
.at-left { border-right: 1px solid #999; }
.at-right { border-left: 1px solid #999; }
.para-mark { margin: 8px 0 0 24px; }

/* Scroll bar */
.scroll { grid-column: 3; grid-row: 1 / 3; display: flex; flex-direction: column; padding-left: 1px; }
.split { height: 2px; margin: 3px 4px 3px; background: #2e4a86; }
.toggle { height: 15px; margin: 0 1px; border: 1px solid #8a95a8; background: #d5d9e0; }
.sarrow { height: 17px; background: #7b9ccb; }
.sarrow .up { border-width: 0 5px 5px; border-bottom-color: #33508a; }
.sarrow .arrow { border-width: 5px 5px 0; border-top-color: #33508a; }
.track { flex: 1; background: linear-gradient(90deg, #6c8fc0, #83a3d0); }
.thumb { display: flex; flex-direction: column; align-items: center; justify-content: center; gap: 1px; height: 113px; margin-right: 1px; border: 1px solid #4f6da0; background: linear-gradient(90deg, #f2f6fc, #d8e2f0 50%, #b4c4dc 70%, #dde6f2); }
.thumb i { width: 8px; height: 1px; background: #5c6c8c; }
.browse { display: flex; flex-direction: column; height: 52px; background: #b7d0f5; }
.browse button { flex: 1; }

/* Status bar */
.status { flex: none; display: flex; height: 21px; color: #1c2e5c; border-top: 1px solid #567db1; background: linear-gradient(#e6f0fc, #cadef8 40%, #b2cff4 45%, #c8dffa); }
.stat { padding: 0 8px 0 9px; border-right: 1px solid #9dbbe2; box-shadow: 1px 0 #eef6ff; }
.stat:first-child { padding-left: 7px; }
.stat.plain { padding: 0 8px; border: 0; box-shadow: none; }
.right { display: flex; align-items: center; margin-left: auto; padding: 0 1px 0 4px; border-left: 1px solid #567db1; background: linear-gradient(#b4cdf1, #8fb2e5 50%, #7fa5dc 52%, #a2c3ef); }
.views { display: flex; height: 18px; border: 1px solid #7796c4; background: #b9cfee; }
.vw { width: 18px; }
.vw + .vw { border-left: 1px solid #a0b9de; }
.vw.sel { background: #f6d689; }
.pct { padding: 0 8px 0 7px; font-size: 13px; }
.slider { appearance: none; width: 102px; height: 16px; margin: 0; background: linear-gradient(#e8f2ff, #e8f2ff) center / 100% 1px no-repeat; }
.slider::-webkit-slider-thumb { appearance: none; width: 9px; height: 12px; border: 1px solid #506a95; border-radius: 1px 1px 5px 5px; background: #e4edfa; }
.grip { align-self: flex-end; margin-left: 7px; }
```
